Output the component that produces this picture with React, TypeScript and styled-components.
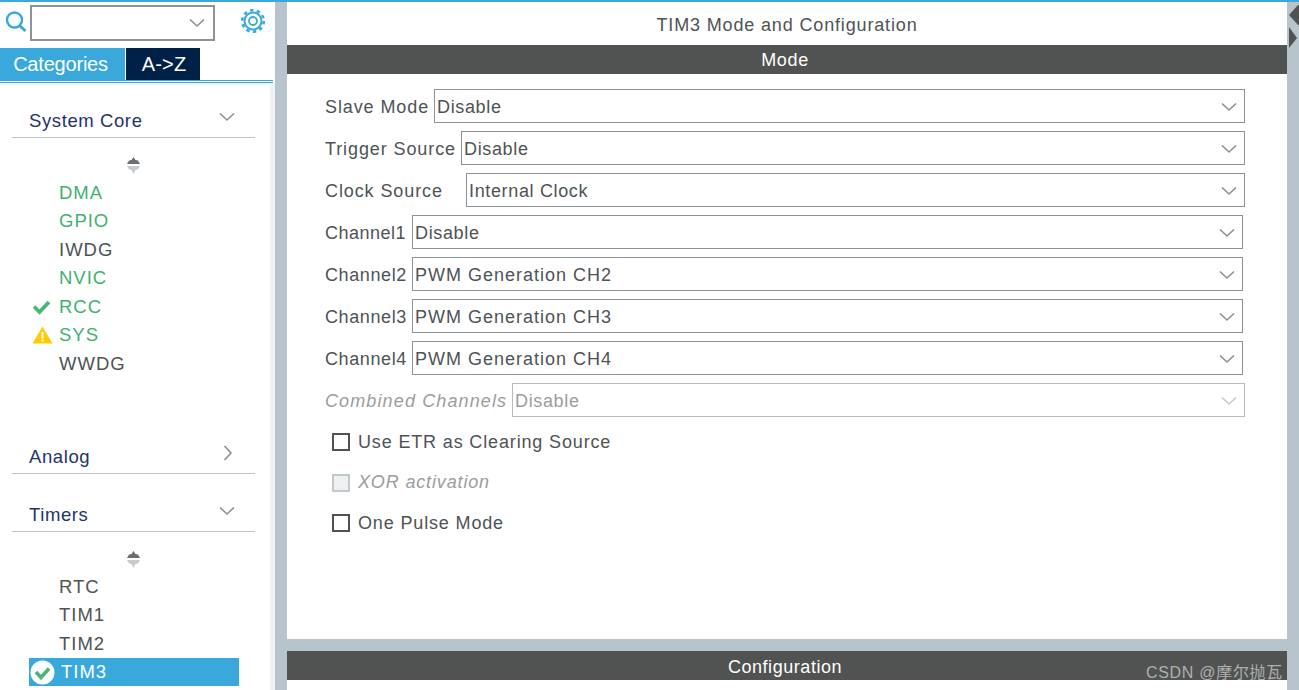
import React from "react";
import styled, { createGlobalStyle } from "styled-components";

const Global = createGlobalStyle`
  html, body { margin: 0; padding: 0; width: 100%; height: 100%; overflow: hidden; background: #fff; }
  body { font-family: "Liberation Sans", Arial, sans-serif; }
  * { box-sizing: border-box; }
`;

const Page = styled.div`
  position: relative;
  width: 1299px;
  height: 690px;
  overflow: hidden;
  display: flex;
  flex-direction: column;
  background: #b8c4cc;
`;
const TopLine = styled.div`
  height: 2px;
  flex: none;
  background: #39a9dc;
`;
const Body = styled.div`
  flex: 1;
  min-height: 0;
  display: flex;
`;
const Sidebar = styled.aside`
  width: 275px;
  flex: none;
  display: flex;
  flex-direction: column;
  background: #fff;
  overflow: hidden;
`;
const SearchRow = styled.div`
  height: 46px;
  flex: none;
  display: flex;
  align-items: flex-start;
  padding: 3px 0 0 5px;
`;
const SearchIcon = styled.div`
  width: 25px;
  flex: none;
  margin-top: 5px;
  display: flex;
`;
const SearchBox = styled.div`
  width: 185px;
  height: 36px;
  border: 2px solid #8c9499;
  display: flex;
  align-items: center;
  justify-content: flex-end;
  padding-right: 8px;
`;
const GearWrap = styled.div`
  margin: 3px 0 0 25px;
  display: flex;
`;
const Tabs = styled.div`
  display: flex;
  height: 32px;
  flex: none;
`;
const Tab = styled.div<{ $active?: boolean; $w: number }>`
  width: ${(p) => p.$w}px;
  margin-right: 1px;
  background: ${(p) => (p.$active ? "#39a9dc" : "#002147")};
  color: #fff;
  font-size: 20px;
  letter-spacing: ${(p) => (p.$active ? "-0.2px" : "0.2px")};
  padding: ${(p) => (p.$active ? "0 4px 0 0" : "0 0 0 2px")};
  display: flex;
  align-items: center;
  justify-content: center;
`;
const TabRule = styled.div`
  height: 3px;
  width: 273px;
  flex: none;
  border-top: 1px solid #39a9dc;
  border-bottom: 1px solid #39a9dc;
`;
const TreePane = styled.div`
  flex: 1;
  min-height: 0;
  border-top: 2px solid #f0f2f3;
  border-right: 5px solid #f0f2f3;
  padding: 0 15px 0 12px;
`;
const GroupHead = styled.div<{ $mt: number }>`
  margin-top: ${(p) => p.$mt}px;
  height: 35px;
  border-bottom: 1px solid #b8c4cc;
  display: flex;
  align-items: center;
  justify-content: space-between;
  padding: 2px 20px 0 17px;
  font-size: 18.5px;
  letter-spacing: 0.6px;
  color: #1f3468;
`;
const HeadIcon = styled.span<{ $right?: boolean }>`
  display: flex;
  margin: 0 ${(p) => (p.$right ? 2 : 0)}px 8px 0;
`;
const Sorter = styled.div`
  height: 40px;
  display: flex;
  justify-content: center;
  align-items: flex-start;
  padding-top: 19px;
`;
const List = styled.div<{ $h: number }>`
  height: ${(p) => p.$h}px;
  display: flex;
  flex-direction: column;
`;
const Item = styled.div<{ $tone?: "green" | "plain"; $selected?: boolean }>`
  height: 28.5px;
  flex: none;
  margin-left: 17px;
  width: 210px;
  padding-top: 1px;
  display: flex;
  align-items: center;
  font-size: 18.5px;
  letter-spacing: 1px;
  color: ${(p) => (p.$selected ? "#fff" : p.$tone === "green" ? "#3fb172" : "#4f5355")};
  background: ${(p) => (p.$selected ? "#39a9dc" : "transparent")};
`;
const ItemIcon = styled.span<{ $w?: number }>`
  width: ${(p) => p.$w ?? 30}px;
  flex: none;
  display: flex;
  align-items: center;
  padding-left: ${(p) => (p.$w ? 1 : 3)}px;
`;
const Main = styled.main`
  width: 1000px;
  margin-left: 12px;
  flex: none;
  display: flex;
  flex-direction: column;
`;
const ModeCard = styled.section`
  height: 637px;
  flex: none;
  background: #fff;
  display: flex;
  flex-direction: column;
`;
const Title = styled.div`
  height: 43px;
  flex: none;
  padding-top: 3px;
  display: flex;
  align-items: center;
  justify-content: center;
  font-size: 18px;
  letter-spacing: 0.85px;
  color: #4f5355;
`;
const SectionBar = styled.div`
  height: 29px;
  flex: none;
  background: #505352;
  color: #fff;
  font-size: 18px;
  letter-spacing: 0.65px;
  padding: 2px 4px 0 0;
  display: flex;
  align-items: center;
  justify-content: center;
`;
const Form = styled.div`
  padding: 15px 42px 0 38px;
  display: flex;
  flex-direction: column;
  gap: 8px;
`;
const CheckForm = styled.div`
  padding: 5px 42px 0 45px;
  display: flex;
  flex-direction: column;
`;
const Row = styled.div<{ $end?: number }>`
  height: 34px;
  display: flex;
  align-items: center;
  margin-right: ${(p) => p.$end ?? 0}px;
`;
const Label = styled.div<{ $w: number; $ls?: number; $disabled?: boolean }>`
  width: ${(p) => p.$w}px;
  flex: none;
  padding-top: 2px;
  font-size: 18px;
  letter-spacing: ${(p) => p.$ls ?? 0.9}px;
  white-space: nowrap;
  color: ${(p) => (p.$disabled ? "#9a9d9f" : "#4f5355")};
  font-style: ${(p) => (p.$disabled ? "italic" : "normal")};
`;
const Select = styled.div<{ $disabled?: boolean; $ls?: number }>`
  flex: 1;
  height: 34px;
  border: 1px solid ${(p) => (p.$disabled ? "#b4babd" : "#8c9499")};
  display: flex;
  align-items: center;
  justify-content: space-between;
  padding: 2px 7px 0 2px;
  font-size: 18px;
  letter-spacing: ${(p) => p.$ls ?? 0.65}px;
  color: ${(p) => (p.$disabled ? "#9a9d9f" : "#4f5355")};
`;
const CheckRow = styled.div<{ $disabled?: boolean }>`
  height: 40.5px;
  display: flex;
  align-items: center;
  gap: 8px;
  font-size: 18px;
  letter-spacing: 0.85px;
  color: ${(p) => (p.$disabled ? "#9a9d9f" : "#4f5355")};
  font-style: ${(p) => (p.$disabled ? "italic" : "normal")};
`;
const Box = styled.span<{ $disabled?: boolean }>`
  width: 18px;
  height: 18px;
  flex: none;
  border: 2px solid ${(p) => (p.$disabled ? "#c4c9cc" : "#505352")};
  background: ${(p) => (p.$disabled ? "#eef0f1" : "#fff")};
`;
const ConfigCard = styled.section`
  margin-top: 12px;
  flex: 1;
  background: #fff;
`;
const ConfigBar = styled(SectionBar)`
  padding-top: 3px;
  letter-spacing: 0.55px;
`;
const Arrows = styled.div`
  position: absolute;
  top: 4px;
  right: 0;
  display: flex;
  flex-direction: column;
  gap: 1px;
  width: 12px;
`;
const Watermark = styled.div`
  position: absolute;
  right: 16px;
  bottom: 7px;
  font-size: 16px;
  letter-spacing: 0.7px;
  color: rgba(255, 255, 255, 0.55);
  font-family: "Liberation Sans", "Noto Sans CJK SC", sans-serif;
`;

const Chevron = ({ color = "#8c8f91", w = 16 }: { color?: string; w?: number }) => (
  <svg width={w} height={10} viewBox="0 0 16 10" fill="none">
    <path d="M1 1.5 L8 8 L15 1.5" stroke={color} strokeWidth="1.6" />
  </svg>
);
const ChevronRight = () => (
  <svg width={10} height={16} viewBox="0 0 10 16" fill="none">
    <path d="M1.5 1 L8 8 L1.5 15" stroke="#8c8f91" strokeWidth="1.6" />
  </svg>
);
const Search = () => (
  <svg width={22} height={24} viewBox="0 0 22 24" fill="none">
    <circle cx="9.5" cy="10" r="7.5" stroke="#39a9dc" strokeWidth="2.4" />
    <path d="M15 16 L20.5 21" stroke="#39a9dc" strokeWidth="3" />
  </svg>
);
const Gear = () => (
  <svg width={26} height={26} viewBox="0 0 26 26" fill="none">
    <circle cx="13" cy="13" r="4" stroke="#39a9dc" strokeWidth="1.8" />
    <circle cx="13" cy="13" r="8.5" stroke="#39a9dc" strokeWidth="2" />
    <circle cx="13" cy="13" r="10.8" stroke="#39a9dc" strokeWidth="2.6" strokeDasharray="3.4 3.4" />
  </svg>
);
const SortIcon = () => (
  <svg width={13} height={17} viewBox="0 0 13 17">
    <path d="M6.5 0 L8.5 3 L11 3.5 L13 7 L0 7 L2 3.5 L4.5 3 Z" fill="#6b6f71" />
    <path d="M0 9 L13 9 L11 12.5 L8.5 13 L6.5 17 L4.5 13 L2 12.5 Z" fill="#c8cbcd" />
  </svg>
);
const Check = () => (
  <svg width={19} height={16} viewBox="0 0 19 16" fill="none">
    <path d="M2 7.5 L7.5 13 L17 3" stroke="#4bb477" strokeWidth="3.8" />
  </svg>
);
const Warn = () => (
  <svg width={21} height={18} viewBox="0 0 21 18">
    <path d="M10.5 0.5 L20.5 17.5 L0.5 17.5 Z" fill="#ffcc00" />
    <rect x="9.5" y="6" width="2" height="6.5" fill="#fff" />
    <rect x="9.5" y="13.5" width="2" height="2" fill="#fff" />
  </svg>
);
const CheckBadge = () => (
  <svg width={25} height={25} viewBox="0 0 25 25" fill="none">
    <circle cx="12.5" cy="12.5" r="12" fill="#fff" />
    <path d="M6 12 L11 17.5 L19 8.5" stroke="#4bb477" strokeWidth="3.6" />
  </svg>
);

const rows = [
  { label: "Slave Mode", w: 109, value: "Disable", end: 0 },
  { label: "Trigger Source", w: 136, value: "Disable", end: 0 },
  { label: "Clock Source", w: 141, value: "Internal Clock", end: 0 },
  { label: "Channel1", w: 87, ls: 0.5, value: "Disable", end: 2 },
  { label: "Channel2", w: 87, ls: 0.6, value: "PWM Generation CH2", vls: 1, end: 2 },
  { label: "Channel3", w: 87, ls: 0.6, value: "PWM Generation CH3", vls: 1, end: 2 },
  { label: "Channel4", w: 87, ls: 0.6, value: "PWM Generation CH4", vls: 1, end: 2 },
];

export default function App() {
  return (
    <Page>
      <Global />
      <TopLine />
      <Body>
        <Sidebar>
          <SearchRow>
            <SearchIcon><Search /></SearchIcon>
            <SearchBox>
              <Chevron />
            </SearchBox>
            <GearWrap>
              <Gear />
            </GearWrap>
          </SearchRow>
          <Tabs>
            <Tab $active $w={125}>Categories</Tab>
            <Tab $w={74}>A-&gt;Z</Tab>
          </Tabs>
          <TabRule />
          <TreePane>
            <GroupHead $mt={18}>
              System Core
              <HeadIcon><Chevron /></HeadIcon>
            </GroupHead>
            <Sorter><SortIcon /></Sorter>
            <List $h={261}>
              <Item $tone="green"><ItemIcon />DMA</Item>
              <Item $tone="green"><ItemIcon />GPIO</Item>
              <Item><ItemIcon />IWDG</Item>
              <Item $tone="green"><ItemIcon />NVIC</Item>
              <Item $tone="green"><ItemIcon><Check /></ItemIcon>RCC</Item>
              <Item $tone="green"><ItemIcon><Warn /></ItemIcon>SYS</Item>
              <Item><ItemIcon />WWDG</Item>
            </List>
            <GroupHead $mt={0}>
              Analog
              <HeadIcon $right><ChevronRight /></HeadIcon>
            </GroupHead>
            <GroupHead $mt={23}>
              Timers
              <HeadIcon><Chevron /></HeadIcon>
            </GroupHead>
            <Sorter><SortIcon /></Sorter>
            <List $h={120}>
              <Item><ItemIcon />RTC</Item>
              <Item><ItemIcon />TIM1</Item>
              <Item><ItemIcon />TIM2</Item>
              <Item $selected><ItemIcon $w={32}><CheckBadge /></ItemIcon>TIM3</Item>
            </List>
          </TreePane>
        </Sidebar>
        <Main>
          <ModeCard>
            <Title>TIM3 Mode and Configuration</Title>
            <SectionBar>Mode</SectionBar>
            <Form>
              {rows.map((r) => (
                <Row key={r.label} $end={r.end}>
                  <Label $w={r.w} $ls={r.ls}>{r.label}</Label>
                  <Select $ls={r.vls}>
                    {r.value}
                    <Chevron />
                  </Select>
                </Row>
              ))}
              <Row>
                <Label $w={187} $ls={1.12} $disabled>Combined Channels</Label>
                <Select $disabled>
                  Disable
                  <Chevron color="#c4c9cc" />
                </Select>
              </Row>
            </Form>
            <CheckForm>
              <CheckRow><Box />Use ETR as Clearing Source</CheckRow>
              <CheckRow $disabled><Box $disabled />XOR activation</CheckRow>
              <CheckRow><Box />One Pulse Mode</CheckRow>
            </CheckForm>
          </ModeCard>
          <ConfigCard>
            <ConfigBar>Configuration</ConfigBar>
          </ConfigCard>
        </Main>
      </Body>
      <Arrows>
        <svg width="12" height="22" viewBox="0 0 12 22"><path d="M2 11 L11 1 L12 1 L12 21 L11 21 Z" fill="#505352" /></svg>
        <svg width="12" height="22" viewBox="0 0 12 22"><path d="M2 0 L10 11 L2 21 Z" fill="#505352" /></svg>
      </Arrows>
      <Watermark>CSDN @摩尔抛瓦</Watermark>
    </Page>
  );
}
